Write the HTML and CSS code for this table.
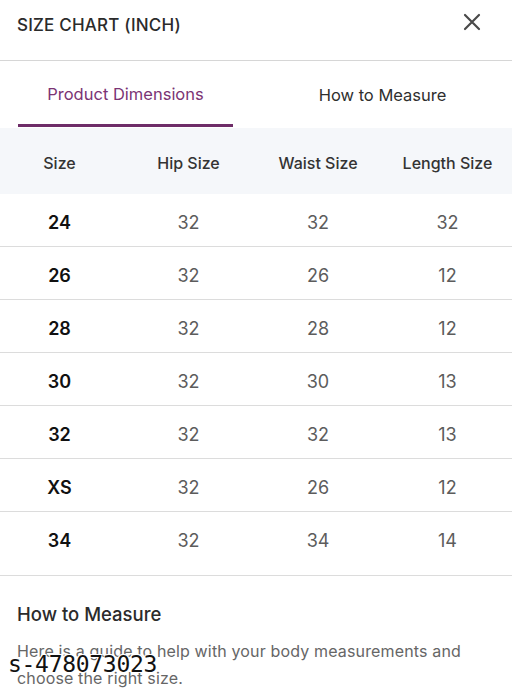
FILE: index.html
```html
<!DOCTYPE html>
<html>
<head>
<meta charset="utf-8">
<link rel="stylesheet" href="styles.css">
</head>
<body>
<div class="sheet">
  <header class="top">
    <h1 class="title">SIZE CHART (INCH)</h1>
    <svg class="close" width="18" height="18" viewBox="0 0 18 18"><path d="M2 2 L16 16 M16 2 L2 16" stroke="#4a4a4a" stroke-width="2.2" stroke-linecap="round"/></svg>
  </header>
  <nav class="tabs">
    <div class="tab active">Product Dimensions</div>
    <div class="tab">How to Measure</div>
  </nav>
  <div class="table">
    <div class="row head"><span>Size</span><span>Hip Size</span><span>Waist Size</span><span>Length Size</span></div>
    <div class="row"><b>24</b><span>32</span><span>32</span><span>32</span></div>
    <div class="row"><b>26</b><span>32</span><span>26</span><span>12</span></div>
    <div class="row"><b>28</b><span>32</span><span>28</span><span>12</span></div>
    <div class="row"><b>30</b><span>32</span><span>30</span><span>13</span></div>
    <div class="row"><b>32</b><span>32</span><span>32</span><span>13</span></div>
    <div class="row"><b>XS</b><span>32</span><span>26</span><span>12</span></div>
    <div class="row last"><b>34</b><span>32</span><span>34</span><span>14</span></div>
  </div>
  <section class="measure">
    <h2>How to Measure</h2>
    <p>Here is a guide to help with your body measurements and choose the right size.</p>
  </section>
  <div class="wm">s-478073023</div>
</div>
</body>
</html>
```
FILE: styles.css
```css
* { box-sizing: border-box; }
html, body { margin: 0; padding: 0; background: #fff; }
body { font-family: "Inter", "Lato", sans-serif; overflow: hidden; }
.sheet { position: relative; width: 512px; height: 689px; overflow: hidden; }
.top { height: 61px; display: flex; align-items: center; justify-content: space-between; padding: 0 31px 0 17px; border-bottom: 1px solid #d6d6d6; }
.title { margin: 0 0 11px; font-size: 17px; font-weight: 500; color: #2b2b2b; letter-spacing: 0.2px; }
.close { margin-bottom: 16px; }
.tabs { display: flex; height: 67px; padding: 0 0 0 18px; }
.tab { display: flex; align-items: center; justify-content: center; font-size: 16.5px; color: #2f2f2f; }
.tab.active { width: 215px; color: #7b3474; border-bottom: 3px solid #6e2c68; padding-top: 3px; margin-bottom: 1px; }
.tab:not(.active) { flex: 1; padding-left: 20px; padding-bottom: 0; }
.table { display: flex; flex-direction: column; }
.row { display: grid; grid-template-columns: 119px 139px 120px 139px; height: 53px; align-items: center; border-bottom: 1.5px solid #dcdcdc; padding-top: 4px; }
.row > * { text-align: center; font-size: 18px; color: #5c5c5c; }
.row > b { font-weight: 600; color: #111; }
.row.head { height: 66px; background: #f5f7fa; border-bottom: none; padding-top: 3px; }
.row.head > span { font-size: 16px; font-weight: 500; color: #333; }
.row.last { height: 64px; padding-bottom: 10px; }
.measure { padding: 27px 17px 0; }
.measure h2 { margin: 0 0 13px; font-size: 18.5px; font-weight: 500; color: #2b2b2b; }
.measure p { margin: 0; font-size: 16px; letter-spacing: 0.15px; line-height: 27px; color: #666; }
.wm { position: absolute; left: 8px; top: 651px; font-family: "DejaVu Sans Mono", monospace; font-size: 23px; color: #111; letter-spacing: -0.3px; text-shadow: 1px 1px 0 #fff, -1px -1px 0 #fff, 1px -1px 0 #fff, -1px 1px 0 #fff; }
```
